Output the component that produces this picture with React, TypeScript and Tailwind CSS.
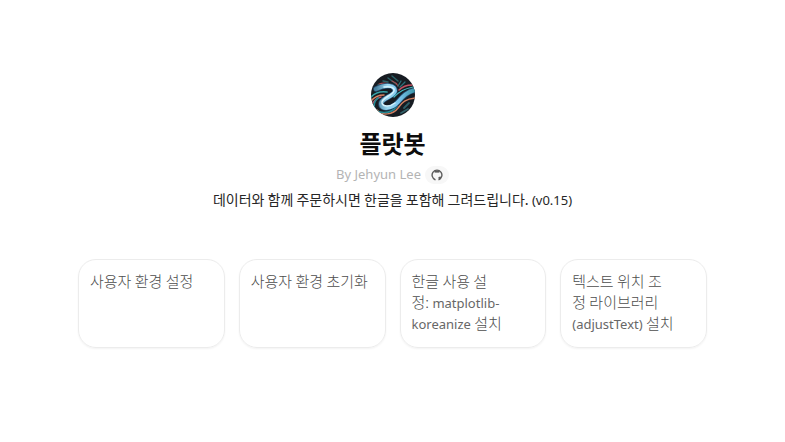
const starters = [
  [{ ko: "사용자 환경 설정" }],
  [{ ko: "사용자 환경 초기화" }],
  [
    { ko: "한글 사용 설" },
    { ko: "정: ", latin: "matplotlib-" },
    { latin: "koreanize", end: " 설치" },
  ],
  [
    { ko: "텍스트 위치 조" },
    { ko: "정 라이브러리" },
    { latin: "(adjustText)", end: " 설치" },
  ],
] as { ko?: string; latin?: string; end?: string }[][];

function Avatar() {
  return (
    <svg viewBox="0 0 44 44" className="size-11 rounded-full" role="img" aria-label="플랏봇">
      <defs>
        <linearGradient id="wave" x1="0" y1="0" x2="1" y2="0">
          <stop offset="0" stopColor="#47809e" />
          <stop offset="0.3" stopColor="#9ad8f2" />
          <stop offset="0.6" stopColor="#79c3ec" />
          <stop offset="1" stopColor="#3a95a6" />
        </linearGradient>
      </defs>
      <rect width="44" height="44" fill="#171c22" />
      <g fill="none" strokeLinecap="round">
        <path d="M7 12l7 0M17 5l8 6M21 3l6 5M12 8l5 1" stroke="#2b6268" strokeWidth="1.5" />
        <path d="M8 11c6-2 12 0 16 3M21 8c3 1 5 3 6 5" stroke="#a94c50" strokeWidth="1.1" />
        <path d="M30 8l-3 5M34 9l-5 5" stroke="#2b6f78" strokeWidth="1.3" />
        <path d="M33 35l5-5M30 40l7-4" stroke="#2f6068" strokeWidth="1.8" />
        <path d="M0 24c5-5 10-6 16-5" stroke="#37a3a8" strokeWidth="1.6" />
        <path d="M0 28c4-5 8-6 13-6" stroke="#d98363" strokeWidth="1.5" />
        <path d="M1 32c2-5 5-7 9-8" stroke="#bb5568" strokeWidth="1.5" />
        <path d="M6 37c5 6 16 5 21-2 4-6 8-9 17-10" stroke="#cf7e60" strokeWidth="1.5" />
        <path d="M3 34c0-4 1-7 4-9M3 34c2 7 17 8 23-1" stroke="#258792" strokeWidth="1.7" />
        <path d="M5 16c10-5 19-4 19 2 0 5-14 7-14 13 0 6 11 5 17-2 5-6 9-10 17-12" stroke="#254f73" strokeWidth="5.5" />
        <path d="M5 16c10-5 19-4 19 2 0 5-14 7-14 13 0 6 11 5 17-2 5-6 9-10 17-12" stroke="url(#wave)" strokeWidth="4" />
        <path d="M13 14c7-1 11 1 10 4-2 5-13 7-12 12 1 4 8 4 13 0" stroke="#d5f1fb" strokeWidth="1.5" />
        <path d="M28 17c4-4 8-5 13-5" stroke="#c25262" strokeWidth="1.6" />
        <path d="M23 24c6-6 10-8 19-10" stroke="#45b6bd" strokeWidth="1.2" />
      </g>
    </svg>
  );
}

function GithubMark() {
  return (
    <svg viewBox="0 0 24 24" className="size-3" aria-hidden="true">
      <path
        d="M8.500 21.300a9.800 9.800 0 1 1 7 0"
        fill="none"
        stroke="#5d5d5d"
        strokeWidth="2.800"
      />
      <path
        d="M6.500 6.300c1.500 0 2.500.5 3.300 1.100a9 9 0 0 1 4.400 0c.8-.6 1.800-1.100 3.300-1.100L16 3.500H8zM8.800 23v-3.200c-1.900.3-2.800-.6-3.600-1.900l-1 1.100c1.300 2.200 2.800 3.300 4.600 4zM15.200 23v-4.500c0-1-.3-1.500-.8-2 1.500-.2 3-.8 3.700-2l2.400 2.500c-1 3-3 5-5.300 6z"
        fill="#5d5d5d"
      />
    </svg>
  );
}

export default function App() {
  return (
    <main className="flex min-h-screen flex-col items-center bg-white px-4 pt-[73px] pb-8 font-['Noto_Sans_CJK_KR',sans-serif] text-[#0d0d0d]">
      <Avatar />
      <h1 className="mt-2 text-2xl leading-9 font-bold">플랏봇</h1>
      <div className="mt-1 flex h-5 items-center gap-1 font-['Noto_Sans',sans-serif] text-[13px] text-[#b4b4b4]">
        <span>By Jehyun Lee</span>
        <a
          href="#github"
          aria-label="GitHub"
          className="flex h-[18px] w-6 items-center justify-center rounded-full bg-[#f7f7f7]"
        >
          <GithubMark />
        </a>
      </div>
      <p className="mt-1 text-center text-[14px] leading-5 text-[#262626]">
        데이터와 함께 주문하시면 한글을 포함해 그려드립니다.{" "}
        <span className="font-['Noto_Sans',sans-serif] text-[13px]">(v0.15)</span>
      </p>
      <div className="mt-[49px] grid w-full max-w-[629px] grid-cols-4 gap-[14px]">
        {starters.map((lines, index) => (
          <button
            key={index}
            type="button"
            className="flex min-h-[89px] flex-col items-start rounded-[18px] border border-[#ececec] px-[11px] pt-[10px] pb-3 text-left text-[15px] leading-[21px] font-light whitespace-pre text-[#4d4d4d] shadow-xs"
          >
            {lines.map((line, row) => (
              <span key={row} className="h-[21px]">
                {line.ko}
                {line.latin && (
                  <span className="font-['Noto_Sans',sans-serif] text-[13px] font-normal text-[#676767]">
                    {line.latin}
                  </span>
                )}
                {line.end}
              </span>
            ))}
          </button>
        ))}
      </div>
    </main>
  );
}
